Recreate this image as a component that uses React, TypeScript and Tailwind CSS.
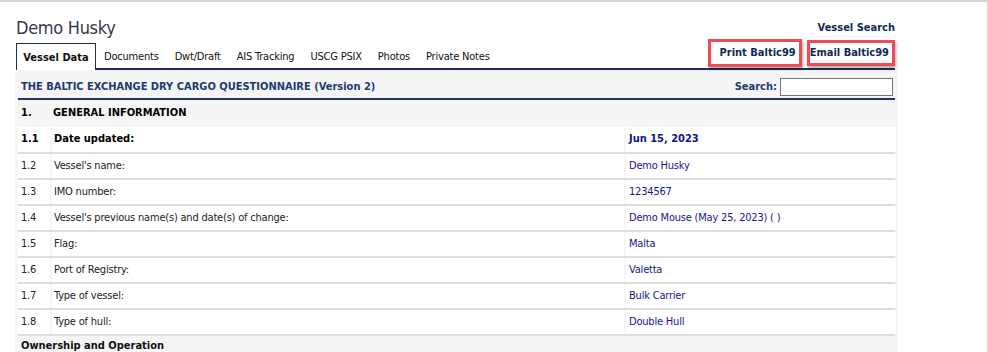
import React from "react";

const rows = [
  { no: "1.2", label: "Vessel's name:", value: "Demo Husky" },
  { no: "1.3", label: "IMO number:", value: "1234567" },
  {
    no: "1.4",
    label: "Vessel's previous name(s) and date(s) of change:",
    value: "Demo Mouse (May 25, 2023) ( )",
  },
  { no: "1.5", label: "Flag:", value: "Malta" },
  { no: "1.6", label: "Port of Registry:", value: "Valetta" },
  { no: "1.7", label: "Type of vessel:", value: "Bulk Carrier" },
  { no: "1.8", label: "Type of hull:", value: "Double Hull" },
];

const tabs = ["Documents", "Dwt/Draft", "AIS Tracking", "USCG PSIX", "Photos", "Private Notes"];

export default function App() {
  return (
    <div className="w-[988px] h-[352px] overflow-hidden bg-white border-t-2 border-r border-[#d6d6d6] font-['DejaVu_Sans_Condensed','DejaVu_Sans',sans-serif] text-[11px] text-black">
      <div className="ml-[15px] w-[883px]">
        <div className="flex justify-between items-end h-[38px] pr-[3px]">
          <h1 className="text-[18px] tracking-[-0.3px] leading-none text-[#35394a] pl-[1px] pb-[3px]">Demo Husky</h1>
          <a className="font-bold text-[#0f2a55] pb-[4px]">Vessel Search</a>
        </div>

        <div className="flex items-end h-[30px] mr-[3px]">
          <div className="h-[27px] w-[80px] flex items-center justify-center pt-[2px] font-bold text-[#111] border border-b-0 border-[#1f2f5c] bg-white ml-[1px]">
            Vessel Data
          </div>
          <div className="flex-1 flex items-center h-[26px] border-b-2 border-[#1f2f5c] pt-[2px] pl-[8px] gap-[16px] tracking-[-0.2px]">
            {tabs.map((t) => (
              <span key={t} className="text-[#111]">
                {t}
              </span>
            ))}
            <div className="ml-auto flex items-center gap-[5px] -mt-[8px] tracking-normal">
              <span className="border-[3px] border-[#ee4b55] shadow-[1px_2px_3px_rgba(0,0,0,0.35)] pl-[9px] pr-[3px] h-[28px] flex items-center font-bold text-[#0f2a55]">
                Print Baltic99
              </span>
              <span className="border-[3px] border-[#ee4b55] shadow-[1px_2px_3px_rgba(0,0,0,0.35)] pl-[0px] pr-[3px] h-[26px] flex items-center font-bold text-[#0f2a55]">
                Email Baltic99
              </span>
            </div>
          </div>
        </div>

        <div className="bg-[#f5f5f5] pl-[3px]">
          <div className="flex items-center justify-between h-[30px] pt-[6px] border-b-2 border-[#1b3a6b] mr-[3px]">
            <span className="pl-[3px] font-bold text-[#1d3b6e]">
              THE BALTIC EXCHANGE DRY CARGO QUESTIONNAIRE (Version 2)
            </span>
            <label className="flex items-center gap-[3px] font-bold text-[#1d3b6e]">
              Search:
              <input className="w-[113px] h-[18px] border border-[#767676] bg-white mr-[2px]" />
            </label>
          </div>

          <div className="flex items-center h-[27px] font-bold">
            <span className="w-[35px] pl-[3px]">1.</span>
            <span>GENERAL INFORMATION</span>
          </div>

          <div className="grid grid-cols-[32px_572px_270px] gap-x-[2px] font-bold border-b-2 border-[#dcdcdc] mr-[3px]">
            <div className="bg-white h-[25px] flex items-center pl-[3px]">1.1</div>
            <div className="bg-white h-[25px] flex items-center pl-[2px]">Date updated:</div>
            <div className="bg-white h-[25px] flex items-center pl-[3px] text-[#0e1487]">Jun 15, 2023</div>
          </div>
          {rows.map((r) => (
            <div
              key={r.no}
              className="grid grid-cols-[32px_572px_270px] gap-x-[2px] border-b-2 border-[#dcdcdc] mr-[3px] tracking-[-0.2px]"
            >
              <div className="bg-white h-[24px] flex items-center pl-[3px] text-[#222]">{r.no}</div>
              <div className="bg-white h-[24px] flex items-center pl-[2px] text-[#222]">{r.label}</div>
              <div className="bg-white h-[24px] flex items-center pl-[3px] text-[#16168a]">{r.value}</div>
            </div>
          ))}

          <div className="flex items-center h-[20px] font-bold pl-[3px] text-[#111]">Ownership and Operation</div>
        </div>
      </div>
    </div>
  );
}
